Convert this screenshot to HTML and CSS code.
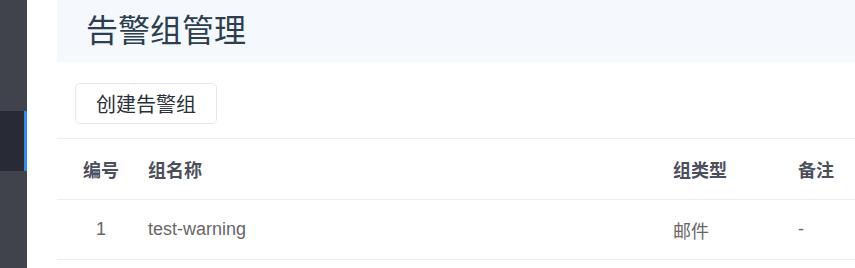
FILE: index.html
```html
<!DOCTYPE html>
<html lang="zh-CN">
<head>
  <meta charset="UTF-8">
  <title>告警组管理</title>
  <link rel="stylesheet" href="styles.css">
</head>
<body>
  <div class="layout">
    <div class="sidebar">
      <div class="nav-item active"></div>
    </div>

    <div class="main">
      <div class="page-header">
        <h1>告警组管理</h1>
      </div>

      <div class="toolbar">
        <button class="btn">创建告警组</button>
      </div>

      <table class="group-table">
        <thead>
          <tr>
            <th class="col-id">编号</th>
            <th class="col-name">组名称</th>
            <th class="col-type">组类型</th>
            <th class="col-note">备注</th>
          </tr>
        </thead>
        <tbody>
          <tr>
            <td class="col-id">1</td>
            <td class="col-name">test-warning</td>
            <td class="col-type">邮件</td>
            <td class="col-note">-</td>
          </tr>
        </tbody>
      </table>
    </div>
  </div>
</body>
</html>
```

FILE: styles.css
```css
body {
  margin: 0;
  font-family: "Liberation Sans", "Noto Sans CJK SC", sans-serif;
  background: #fff;
  overflow: hidden;
}
.layout {
  display: flex;
  min-height: 268px;
}
.sidebar {
  width: 27px;
  flex-shrink: 0;
  background: #40434c;
  padding-top: 111px;
  box-sizing: border-box;
}
.nav-item {
  height: 60px;
}
.nav-item.active {
  background: #282b35;
  border-right: 3px solid #2d8cf0;
}
.main {
  flex: 1;
  padding-left: 30px;
  min-width: 0;
}
.page-header {
  height: 62px;
  background: #f5f9fd;
  display: flex;
  align-items: center;
  padding-left: 29px;
  padding-bottom: 6px;
  box-sizing: border-box;
}
.page-header h1 {
  margin: 0;
  font-size: 32px;
  font-weight: normal;
  color: #2c3e50;
  font-family: "Noto Sans CJK SC", sans-serif;
}
.toolbar {
  padding: 21px 0 14px 18px;
}
.btn {
  width: 142px;
  height: 41px;
  background: #fff;
  border: 1px solid #e3e6ec;
  border-radius: 5px;
  font-family: "Noto Sans CJK SC", sans-serif;
  font-size: 20px;
  color: #2b2f3a;
  padding: 0;
  cursor: pointer;
}
.group-table {
  width: 100%;
  border-collapse: collapse;
  font-size: 18px;
  border-top: 1px solid #ebeef5;
}
.group-table th,
.group-table td {
  height: 60px;
  padding: 0 0 0 3px;
  text-align: left;
  border-bottom: 1px solid #ebeef5;
}
.group-table th {
  color: #4a4f5c;
  font-weight: bold;
}
.group-table td {
  height: 59px;
  color: #6a6668;
}
.group-table .col-id {
  width: 88px;
  padding-left: 0;
  text-align: center;
}
.group-table .col-name {
  width: 522px;
}
.group-table .col-type {
  width: 122px;
}
```
